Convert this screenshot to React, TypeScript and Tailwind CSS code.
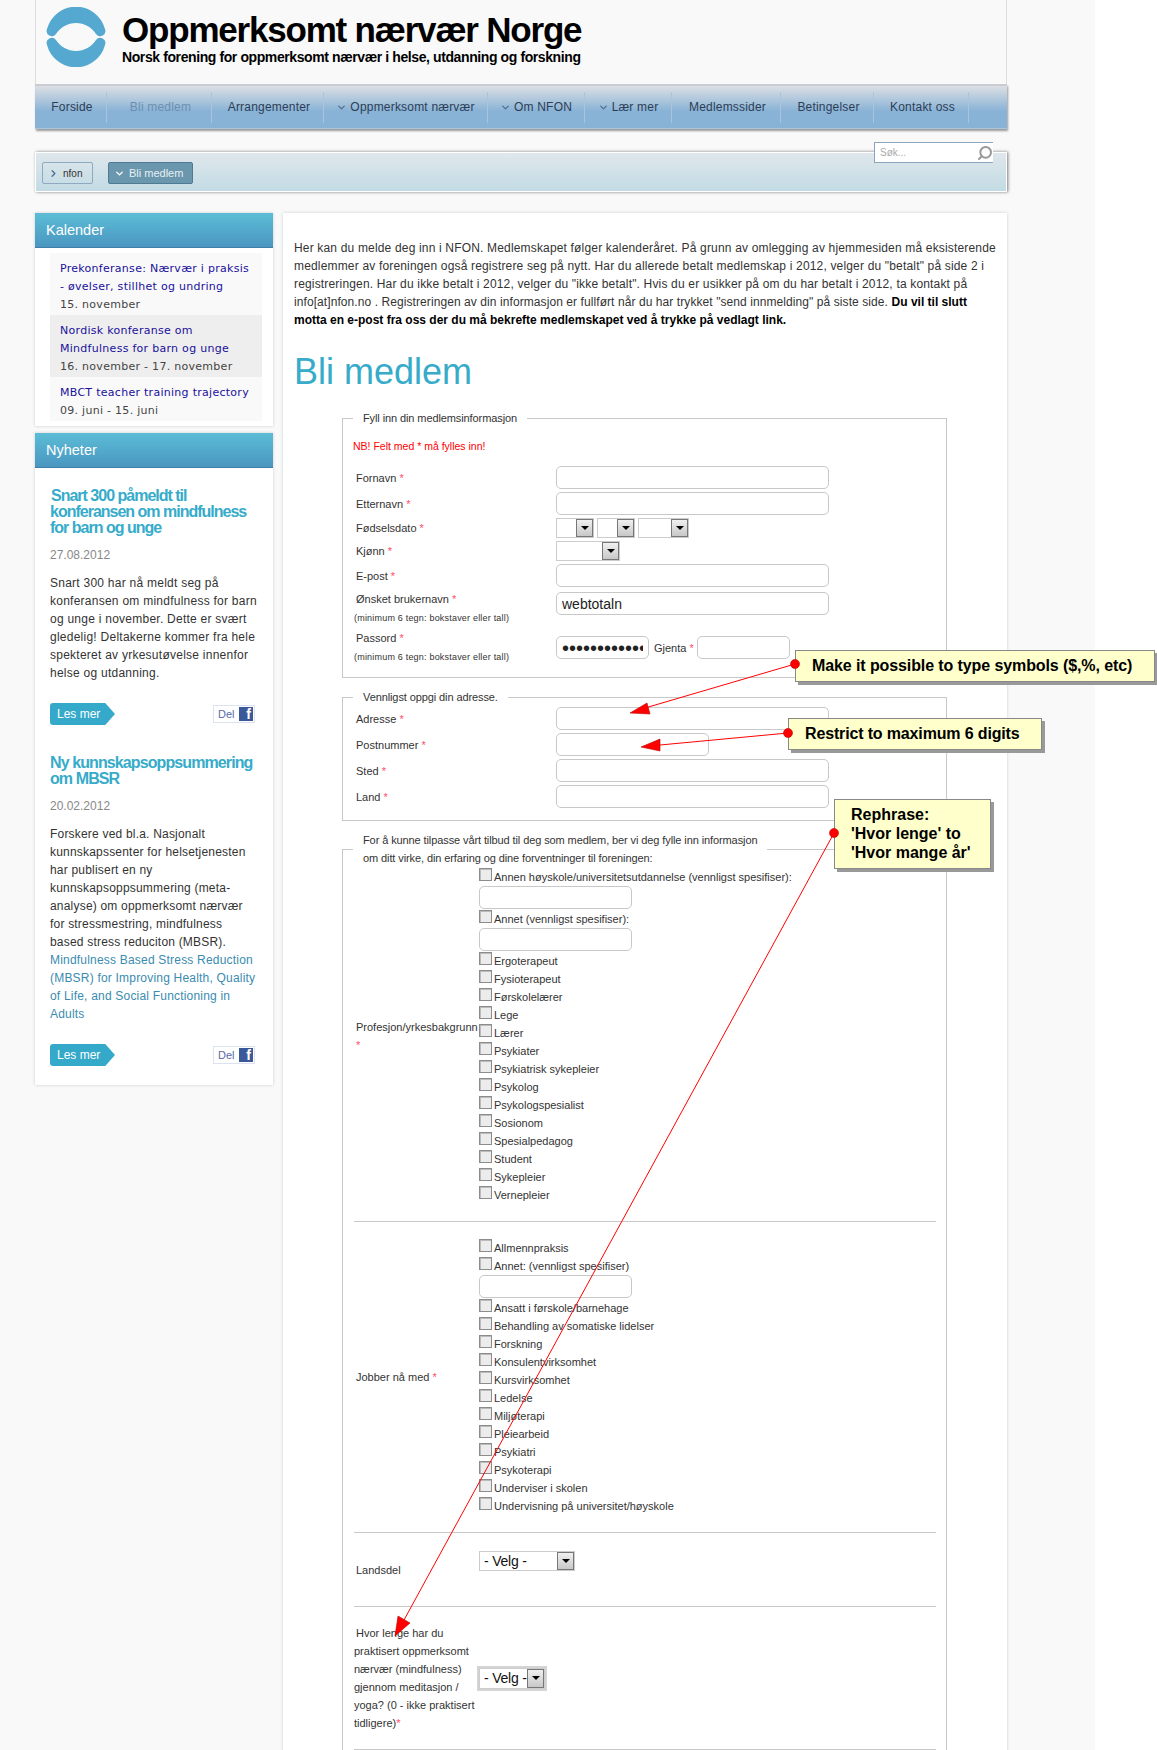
import { ChevronDown, ChevronRight, Search } from "lucide-react";

const navItems = [
  { label: "Forside", w: "w-[72px]" },
  { label: "Bli medlem", w: "w-[105px]", muted: true },
  { label: "Arrangementer", w: "w-[112px]" },
  { label: "Oppmerksomt nærvær", w: "w-[164px]", caret: true },
  { label: "Om NFON", w: "w-[97px]", caret: true },
  { label: "Lær mer", w: "w-[87px]", caret: true },
  { label: "Medlemssider", w: "w-[109px]" },
  { label: "Betingelser", w: "w-[93px]" },
  { label: "Kontakt oss", w: "w-[95px]" },
];

const events = [
  { title: ["Prekonferanse: Nærvær i praksis", "- øvelser, stillhet og undring"], date: "15. november", bg: "bg-[#f9f9f9]" },
  { title: ["Nordisk konferanse om", "Mindfulness for barn og unge"], date: "16. november - 17. november", bg: "bg-[#eeeeee]" },
  { title: ["MBCT teacher training trajectory"], date: "09. juni - 15. juni", bg: "bg-[#f9f9f9]" },
];

const professions = [
  "Ergoterapeut", "Fysioterapeut", "Førskolelærer", "Lege", "Lærer", "Psykiater", "Psykiatrisk sykepleier",
  "Psykolog", "Psykologspesialist", "Sosionom", "Spesialpedagog", "Student", "Sykepleier", "Vernepleier",
];

const jobs = [
  "Ansatt i førskole/barnehage", "Behandling av somatiske lidelser", "Forskning", "Konsulentvirksomhet",
  "Kursvirksomhet", "Ledelse", "Miljøterapi", "Pleiearbeid", "Psykiatri", "Psykoterapi", "Underviser i skolen",
  "Undervisning på universitet/høyskole",
];

function Star() {
  return <span className="text-[#ff4d6a]">*</span>;
}

function TextInput({ w = "w-[273px]", value, type = "text", size = "text-[14px]" }: { w?: string; value?: string; type?: string; size?: string }) {
  return (
    <input
      type={type}
      readOnly
      value={value ?? ""}
      className={`${w} ${size} block h-[23px] rounded-[5px] border border-[#c8c8c8] bg-white px-[5px] text-[#222]`}
    />
  );
}

function FakeSelect({ w, text, h = "h-[20px]" }: { w: string; text?: string; h?: string }) {
  return (
    <div className={`${w} ${h} flex items-stretch border border-[#ccc] bg-white`}>
      <div className="flex-1 overflow-hidden whitespace-nowrap pl-[4px] text-[14px] leading-[18px] tracking-[-0.2px] text-[#111]">{text}</div>
      <div className="flex w-[17px] shrink-0 items-center justify-center border border-[#777] bg-gradient-to-b from-[#f0f0f0] to-[#c8c8c8]">
        <div className="h-0 w-0 border-x-[4px] border-t-[4px] border-x-transparent border-t-black" />
      </div>
    </div>
  );
}

function Check({ label }: { label: string }) {
  return (
    <label className="flex h-[18px] items-start text-[11px] leading-[18px] text-[#333]">
      <input type="checkbox" className="mr-[2px] h-[13px] w-[13px] shrink-0 appearance-none border border-[#8c8c8c] bg-[#ececec] shadow-[inset_1px_1px_0_#bbb]" />
      <span>{label}</span>
    </label>
  );
}

function FormRow({ label, children }: { label: string; children: React.ReactNode }) {
  return (
    <div className="grid grid-cols-[200px_1fr] items-center">
      <div className="text-[11px] leading-[16px] text-[#333]">
        {label} <Star />
      </div>
      {children}
    </div>
  );
}

function Hint() {
  return <div className="-ml-[2px] mt-[3px] text-[9px] leading-[16px] tracking-[0.2px] text-[#333]">(minimum 6 tegn: bokstaver eller tall)</div>;
}

function LesMer() {
  return (
    <div className="flex items-center justify-between">
      <div className="flex h-[22px] w-[65px] items-center rounded-l-[3px] bg-[#35a9c9] pl-[7px] text-[12px] text-white [clip-path:polygon(0_0,85%_0,100%_50%,85%_100%,0_100%)]">
        Les mer
      </div>
      <div className="mr-[3px] flex h-[18px] w-[42px] items-center justify-between border border-[#dde3ee] pl-[4px] pr-[1px] text-[11px] text-[#5a6aa8]">
        Del
        <div className="flex h-[14px] w-[14px] items-end justify-end overflow-hidden bg-[#3b5998] pr-[2px] text-[14px] font-bold leading-[13px] text-white">f</div>
      </div>
    </div>
  );
}

function PanelHead({ title }: { title: string }) {
  return (
    <div className="flex h-[35px] items-center border-b border-[#3f7fa8] bg-gradient-to-b from-[#5cbdd6] to-[#4a96c1] pl-[11px] pt-[2px] text-[14.5px] text-white">
      {title}
    </div>
  );
}

function Logo() {
  const d = "M1,22 A30,30 0 0 1 59,22 A5.2,5.2 0 0 1 50,27 A23.7,23.7 0 0 0 10,27 A5.2,5.2 0 0 1 1,22 Z";
  return (
    <svg width="60" height="60" viewBox="0 0 60 60" className="shrink-0">
      <path d={d} fill="#55a9d1" />
      <path d={d} fill="#55a9d1" transform="translate(0,60) scale(1,-1)" />
    </svg>
  );
}

export default function App() {
  return (
    <div className="relative h-[1750px] w-[1157px] overflow-hidden bg-white font-['Liberation_Sans',Arial,sans-serif] text-[#333]">
      <div className="h-full w-[1095px] bg-[#f9f9f9] pl-[35px]">
        <div className="w-[972px]">
          {/* Header */}
          <div className="flex h-[84px] gap-[16px] border-x border-[#ddd] pl-[10px] pt-[7px]">
            <Logo />
            <div className="text-black">
              <div className="mt-[5px] text-[35px] font-bold leading-[36px] tracking-[-1.2px]">Oppmerksomt nærvær Norge</div>
              <div className="mt-[1px] text-[14px] font-bold leading-[16px] tracking-[-0.4px]">Norsk forening for oppmerksomt nærvær i helse, utdanning og forskning</div>
            </div>
          </div>

          {/* Nav */}
          <div className="flex h-[45px] items-center border-b border-t-2 border-b-[#a9c6df] border-t-[#c9cdd3] bg-gradient-to-b from-[#dcdfe3] via-[#88b2d6] via-60% to-[#88b2d6] shadow-[1px_2px_2px_#999]">
            {navItems.map((item) => (
              <div
                key={item.label}
                className={`${item.w} ${item.caret ? "" : "pl-[3px]"} flex h-[31px] items-center justify-center gap-[3px] border-r border-[#a9c4dc] text-[12px] tracking-[0.2px] ${
                  item.muted ? "text-[#6c8fb0]" : "text-[#2c3e56]"
                }`}
              >
                {item.caret && <ChevronDown size={11} strokeWidth={3} className="text-[#4f7193]" />}
                {item.label}
              </div>
            ))}
          </div>

          {/* Breadcrumb */}
          <div className="relative mt-[23px] flex h-[40px] items-center gap-[15px] border border-white bg-gradient-to-b from-[#dfe7ec] to-[#c2dbe4] pl-[6px] pt-[2px] shadow-[1px_0_3px_#777]">
            <div className="flex h-[22px] w-[51px] items-center gap-[4px] rounded-[2px] border border-[#8fa9c0] pl-[5px] text-[10px] text-[#333]">
              <ChevronRight size={11} strokeWidth={3} className="text-[#4f7193]" />
              nfon
            </div>
            <div className="flex h-[22px] w-[85px] items-center gap-[4px] whitespace-nowrap rounded-[2px] border border-[#4f7a92] bg-[#6a97ad] pl-[5px] text-[11px] text-[#e8f0f4]">
              <ChevronDown size={11} strokeWidth={3} className="text-white" />
              Bli medlem
            </div>
            <div className="absolute left-[838px] top-[-11px] flex h-[21px] w-[119px] items-center justify-between border-y border-l border-[#8aa5bd] bg-white pl-[5px]">
              <input readOnly placeholder="Søk..." className="w-[90px] text-[10px] placeholder:text-[#aaa]" />
              <Search size={16} strokeWidth={3} className="-scale-x-100 text-[#999]" />
            </div>
          </div>

          <div className="mt-[21px] flex gap-[10px]">
            {/* Sidebar */}
            <aside className="w-[238px] shrink-0">
              <div className="bg-white pb-[5px] shadow-[0_0_3px_#ccc]">
                <PanelHead title="Kalender" />
                <div className="ml-[15px] mt-[5px] w-[212px] font-['DejaVu_Sans',sans-serif] text-[11px] leading-[18px] tracking-[0.28px]">
                  {events.map((ev) => (
                    <div key={ev.date} className={`${ev.bg} pb-[1px] pl-[10px] pt-[7px]`}>
                      {ev.title.map((line) => (
                        <div key={line} className="text-[#20109c]">{line}</div>
                      ))}
                      <div className="text-[#444]">{ev.date}</div>
                    </div>
                  ))}
                </div>
              </div>

              <div className="mt-[7px] bg-white pb-[19px] shadow-[0_0_3px_#ccc]">
                <PanelHead title="Nyheter" />
                <div className="px-[15px]">
                  <h3 className="mt-[20px] text-[16px] font-bold leading-[16px] tracking-[-1px] text-[#36abca]">
                    <span className="pl-[1px]">Snart 300 påmeldt til</span>
                    <br />
                    konferansen om mindfulness
                    <br />
                    for barn og unge
                  </h3>
                  <div className="mt-[10px] text-[12px] leading-[18px] text-[#888]">27.08.2012</div>
                  <p className="mb-[21px] mt-[10px] text-[12px] leading-[18px] tracking-[0.25px]">
                    Snart 300 har nå meldt seg på konferansen om mindfulness for barn og unge i november. Dette er svært gledelig! Deltakerne kommer fra hele spekteret av yrkesutøvelse innenfor helse og utdanning.
                  </p>
                  <LesMer />
                  <h3 className="mt-[30px] text-[16px] font-bold leading-[16px] tracking-[-0.9px] text-[#36abca]">
                    Ny kunnskapsoppsummering
                    <br />
                    om MBSR
                  </h3>
                  <div className="mt-[10px] text-[12px] leading-[18px] text-[#888]">20.02.2012</div>
                  <p className="mb-[21px] mt-[10px] text-[12px] leading-[18px] tracking-[0.2px]">
                    Forskere ved bl.a. Nasjonalt kunnskapssenter for helsetjenesten har publisert en ny kunnskapsoppsummering (meta-analyse) om oppmerksomt nærvær for stressmestring, mindfulness based stress reduciton (MBSR).
                    <br />
                    <span className="text-[#3a8bb0]">Mindfulness Based Stress Reduction (MBSR) for Improving Health, Quality of Life, and Social Functioning in Adults</span>
                  </p>
                  <LesMer />
                </div>
              </div>
            </aside>

            {/* Main */}
            <main className="h-[1600px] flex-1 bg-white pl-[11px] pt-[26px] shadow-[0_0_3px_#ccc]">
              <p className="w-[712px] text-[12px] leading-[18px] tracking-[0.17px]">
                Her kan du melde deg inn i NFON. Medlemskapet følger kalenderåret. På grunn av omlegging av hjemmesiden må eksisterende
                <br />
                medlemmer av foreningen også registrere seg på nytt. Har du allerede betalt medlemskap i 2012, velger du "betalt" på side 2 i
                <br />
                registreringen. Har du ikke betalt i 2012, velger du "ikke betalt". Hvis du er usikker på om du har betalt i 2012, ta kontakt på
                <br />
                <span className="tracking-[0.08px]">info[at]nfon.no . Registreringen av din informasjon er fullført når du har trykket "send innmelding" på siste side.</span>{" "}
                <b className="tracking-normal text-black">
                  Du vil til slutt
                  <br />
                  motta en e-post fra oss der du må bekrefte medlemskapet ved å trykke på vedlagt link.
                </b>
              </p>
              <h1 className="mb-[15px] mt-[21px] text-[36px] leading-[44px] text-[#36abca]">Bli medlem</h1>

              <div className="ml-[48px] w-[605px]">
                {/* Member info */}
                <fieldset className="border border-[#c8c8c8] pb-[12px] pl-[13px]">
                  <legend className="-ml-[3px] px-[10px] text-[11px] leading-[18px] tracking-[-0.1px]">Fyll inn din medlemsinformasjon</legend>
                  <div className="-ml-[3px] mt-[10px] text-[10.5px] leading-[18px] text-[#f00]">NB! Felt med * må fylles inn!</div>
                  <div className="mt-[11px] flex flex-col gap-[3px]">
                    <FormRow label="Fornavn"><TextInput /></FormRow>
                    <FormRow label="Etternavn"><TextInput /></FormRow>
                    <FormRow label="Fødselsdato">
                      <div className="flex gap-[3px]">
                        <FakeSelect w="w-[38px]" />
                        <FakeSelect w="w-[38px]" />
                        <FakeSelect w="w-[51px]" />
                      </div>
                    </FormRow>
                    <FormRow label="Kjønn"><FakeSelect w="w-[64px]" /></FormRow>
                    <FormRow label="E-post"><TextInput /></FormRow>
                  </div>
                  <div className="mt-[4px] grid grid-cols-[200px_1fr] items-start">
                    <div className="text-[11px] leading-[16px]">
                      Ønsket brukernavn <Star />
                      <Hint />
                    </div>
                    <div className="mt-[1px]"><TextInput value="webtotaln" /></div>
                  </div>
                  <div className="mt-[4px] grid grid-cols-[200px_1fr] items-start">
                    <div className="text-[11px] leading-[16px]">
                      Passord <Star />
                      <Hint />
                    </div>
                    <div className="mt-[6px] flex items-center gap-[5px] text-[11px]">
                      <TextInput w="w-[93px]" type="password" value="webtotaln123" size="text-[20px]" />
                      <span className="mt-[2px]">Gjenta <Star /></span>
                      <div className="-ml-[2px]"><TextInput w="w-[93px]" /></div>
                    </div>
                  </div>
                </fieldset>

                {/* Address */}
                <fieldset className="mt-[10px] border border-[#c8c8c8] pb-[12px] pl-[13px]">
                  <legend className="-ml-[3px] px-[10px] text-[11px] leading-[18px] tracking-[-0.1px]">Vennligst oppgi din adresse.</legend>
                  <div className="mt-[1px] flex flex-col gap-[3px]">
                    <FormRow label="Adresse"><TextInput /></FormRow>
                    <FormRow label="Postnummer"><TextInput w="w-[153px]" /></FormRow>
                    <FormRow label="Sted"><TextInput /></FormRow>
                    <FormRow label="Land"><TextInput /></FormRow>
                  </div>
                </fieldset>

                {/* Background */}
                <fieldset className="mt-[10px] border-x border-t border-[#c8c8c8] pl-[11px] pr-[10px]">
                  <legend className="-ml-[1px] px-[10px] text-[11px] leading-[18px] tracking-[-0.1px]">
                    For å kunne tilpasse vårt tilbud til deg som medlem, ber vi deg fylle inn informasjon
                    <br />
                    om ditt virke, din erfaring og dine forventninger til foreningen:
                  </legend>
                  <div className="mt-[1px] grid grid-cols-[125px_1fr] items-center pb-[17px]">
                    <div className="pl-[2px] text-[11px] leading-[18px]">
                      Profesjon/yrkesbakgrunn
                      <br />
                      <Star />
                    </div>
                    <div>
                      <Check label="Annen høyskole/universitetsutdannelse (vennligst spesifiser):" />
                      <TextInput w="w-[153px]" />
                      <div className="mt-[1px]"><Check label="Annet (vennligst spesifiser):" /></div>
                      <TextInput w="w-[153px]" />
                      <div className="mt-[1px]">
                        {professions.map((p) => <Check key={p} label={p} />)}
                      </div>
                    </div>
                  </div>

                  <div className="grid grid-cols-[125px_1fr] items-center border-t border-[#c8c8c8] py-[17px]">
                    <div className="pl-[2px] text-[11px] leading-[18px]">
                      Jobber nå med <Star />
                    </div>
                    <div>
                      <Check label="Allmennpraksis" />
                      <Check label="Annet: (vennligst spesifiser)" />
                      <TextInput w="w-[153px]" />
                      <div className="mt-[1px]">
                        {jobs.map((j) => <Check key={j} label={j} />)}
                      </div>
                    </div>
                  </div>

                  <div className="grid h-[74px] grid-cols-[125px_1fr] items-start border-t border-[#c8c8c8]">
                    <div className="mt-[29px] pl-[2px] text-[11px] leading-[16px]">Landsdel</div>
                    <div className="mt-[18px]"><FakeSelect w="w-[96px]" text="- Velg -" /></div>
                  </div>

                  <div className="grid grid-cols-[123px_1fr] items-center border-t border-[#c8c8c8] py-[17px]">
                    <div className="text-[11px] leading-[18px]">
                      <span className="pl-[2px]">Hvor lenge har du</span>
                      <br />
                      praktisert oppmerksomt
                      <br />
                      nærvær (mindfulness)
                      <br />
                      gjennom meditasjon /
                      <br />
                      yoga? (0 - ikke praktisert
                      <br />
                      tidligere)<Star />
                    </div>
                    <div className="w-[70px] border-[2px] border-[#d4d4d4]">
                      <FakeSelect w="w-full" h="h-[21px]" text="- Velg -" />
                    </div>
                  </div>

                  <div className="border-t border-[#c8c8c8]" />
                </fieldset>
              </div>
            </main>
          </div>
        </div>
      </div>

      {/* Review annotations */}
      <div className="absolute left-[795px] top-[650px] flex h-[32px] w-[360px] items-center border border-[#888] bg-[#ffffcc] pl-[16px] text-[16px] font-bold tracking-[-0.1px] text-black shadow-[3px_3px_0_#999]">
        Make it possible to type symbols ($,%, etc)
      </div>
      <div className="absolute left-[788px] top-[718px] flex h-[32px] w-[254px] items-center border border-[#888] bg-[#ffffcc] pl-[16px] text-[16px] font-bold tracking-[-0.15px] text-black shadow-[3px_3px_0_#999]">
        Restrict to maximum 6 digits
      </div>
      <div className="absolute left-[834px] top-[799px] h-[70px] w-[157px] border border-[#888] bg-[#ffffcc] pl-[16px] pt-[5px] text-[16px] font-bold leading-[19px] text-black shadow-[3px_3px_0_#999]">
        Rephrase:
        <br />
        'Hvor lenge' to
        <br />
        'Hvor mange år'
      </div>
      <svg width="1157" height="1750" className="pointer-events-none absolute left-0 top-0">
        <line x1="795" y1="664" x2="645" y2="708" stroke="#f00" strokeWidth="1" />
        <polygon points="630,713 647,703 650,714" fill="#f00" stroke="#b00" strokeWidth="0.6" />
        <circle cx="795" cy="664" r="4.5" fill="#f00" stroke="#b00" strokeWidth="0.6" />
        <line x1="788" y1="733" x2="660" y2="745" stroke="#f00" strokeWidth="1" />
        <polygon points="641,747 660,739 660,751" fill="#f00" stroke="#b00" strokeWidth="0.6" />
        <circle cx="788" cy="733" r="4.5" fill="#f00" stroke="#b00" strokeWidth="0.6" />
        <line x1="834" y1="833" x2="404" y2="1620" stroke="#f00" strokeWidth="1" />
        <polygon points="395,1636 398,1616 410,1623" fill="#f00" stroke="#b00" strokeWidth="0.6" />
        <circle cx="834" cy="833" r="4.5" fill="#f00" stroke="#b00" strokeWidth="0.6" />
      </svg>
    </div>
  );
}
